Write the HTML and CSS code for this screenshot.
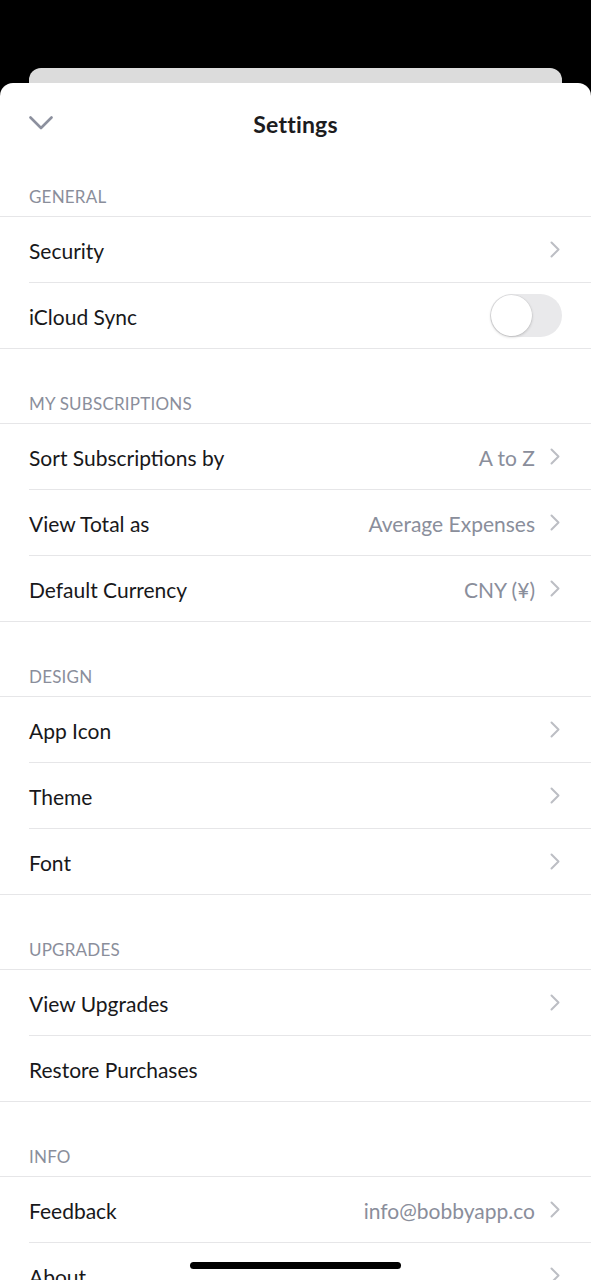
FILE: index.html
```html
<!DOCTYPE html>
<html>
<head>
<meta charset="utf-8">
<link rel="stylesheet" href="styles.css">
</head>
<body>
<div class="backcard"></div>
<div class="sheet">
  <div class="nav">
    <svg class="down" width="24" height="14" viewBox="0 0 24 14"><path d="M1.5 1.5 L12 12 L22.5 1.5" fill="none" stroke="#8c909e" stroke-width="2.6" stroke-linecap="round" stroke-linejoin="round"/></svg>
    <div class="title">Settings</div>
  </div>

  <div class="sechead">GENERAL</div>
  <div class="group">
    <div class="row"><span class="label">Security</span><span class="right"><svg class="chev" width="10" height="17" viewBox="0 0 10 17"><path d="M1.5 1.5 L8.5 8.5 L1.5 15.5" fill="none" stroke="#bcbec4" stroke-width="2" stroke-linecap="round" stroke-linejoin="round"/></svg></span></div>
    <div class="row"><span class="label">iCloud Sync</span><span class="toggle"><span class="knob"></span></span></div>
  </div>

  <div class="sechead">MY SUBSCRIPTIONS</div>
  <div class="group">
    <div class="row"><span class="label">Sort Subscriptions by</span><span class="right"><span class="value">A to Z</span><svg class="chev" width="10" height="17" viewBox="0 0 10 17"><path d="M1.5 1.5 L8.5 8.5 L1.5 15.5" fill="none" stroke="#bcbec4" stroke-width="2" stroke-linecap="round" stroke-linejoin="round"/></svg></span></div>
    <div class="row"><span class="label">View Total as</span><span class="right"><span class="value">Average Expenses</span><svg class="chev" width="10" height="17" viewBox="0 0 10 17"><path d="M1.5 1.5 L8.5 8.5 L1.5 15.5" fill="none" stroke="#bcbec4" stroke-width="2" stroke-linecap="round" stroke-linejoin="round"/></svg></span></div>
    <div class="row"><span class="label">Default Currency</span><span class="right"><span class="value">CNY (¥)</span><svg class="chev" width="10" height="17" viewBox="0 0 10 17"><path d="M1.5 1.5 L8.5 8.5 L1.5 15.5" fill="none" stroke="#bcbec4" stroke-width="2" stroke-linecap="round" stroke-linejoin="round"/></svg></span></div>
  </div>

  <div class="sechead">DESIGN</div>
  <div class="group">
    <div class="row"><span class="label">App Icon</span><span class="right"><svg class="chev" width="10" height="17" viewBox="0 0 10 17"><path d="M1.5 1.5 L8.5 8.5 L1.5 15.5" fill="none" stroke="#bcbec4" stroke-width="2" stroke-linecap="round" stroke-linejoin="round"/></svg></span></div>
    <div class="row"><span class="label">Theme</span><span class="right"><svg class="chev" width="10" height="17" viewBox="0 0 10 17"><path d="M1.5 1.5 L8.5 8.5 L1.5 15.5" fill="none" stroke="#bcbec4" stroke-width="2" stroke-linecap="round" stroke-linejoin="round"/></svg></span></div>
    <div class="row"><span class="label">Font</span><span class="right"><svg class="chev" width="10" height="17" viewBox="0 0 10 17"><path d="M1.5 1.5 L8.5 8.5 L1.5 15.5" fill="none" stroke="#bcbec4" stroke-width="2" stroke-linecap="round" stroke-linejoin="round"/></svg></span></div>
  </div>

  <div class="sechead">UPGRADES</div>
  <div class="group">
    <div class="row"><span class="label">View Upgrades</span><span class="right"><svg class="chev" width="10" height="17" viewBox="0 0 10 17"><path d="M1.5 1.5 L8.5 8.5 L1.5 15.5" fill="none" stroke="#bcbec4" stroke-width="2" stroke-linecap="round" stroke-linejoin="round"/></svg></span></div>
    <div class="row"><span class="label">Restore Purchases</span></div>
  </div>

  <div class="sechead">INFO</div>
  <div class="group">
    <div class="row"><span class="label">Feedback</span><span class="right"><span class="value">info@bobbyapp.co</span><svg class="chev" width="10" height="17" viewBox="0 0 10 17"><path d="M1.5 1.5 L8.5 8.5 L1.5 15.5" fill="none" stroke="#bcbec4" stroke-width="2" stroke-linecap="round" stroke-linejoin="round"/></svg></span></div>
    <div class="row"><span class="label">About</span><span class="right"><svg class="chev" width="10" height="17" viewBox="0 0 10 17"><path d="M1.5 1.5 L8.5 8.5 L1.5 15.5" fill="none" stroke="#bcbec4" stroke-width="2" stroke-linecap="round" stroke-linejoin="round"/></svg></span></div>
  </div>
</div>
<div class="home-indicator"></div>
</body>
</html>
```

FILE: styles.css
```css
html, body {
  margin: 0;
  padding: 0;
}
body {
  background: #000;
  width: 591px;
  height: 1280px;
  overflow: hidden;
  position: relative;
  font-family: "Lato", "Open Sans", sans-serif;
  -webkit-font-smoothing: antialiased;
}
.backcard {
  margin: 68px 29px 0;
  height: 15px;
  background: #dcdcdc;
  border-radius: 12px 12px 0 0;
}
.sheet {
  background: #fff;
  border-radius: 13px 13px 0 0;
  min-height: 1300px;
}
.nav {
  height: 59px;
  display: grid;
  grid-template-columns: 100px 1fr 100px;
  align-items: start;
}
.down {
  margin: 33px 0 0 29px;
}
.title {
  grid-column: 2;
  text-align: center;
  padding-top: 27px;
  line-height: 28px;
  font-size: 23px;
  font-weight: 700;
  letter-spacing: 0.2px;
  color: #1c1c1e;
}
.sechead {
  height: 75px;
  box-sizing: border-box;
  padding: 45px 29px 0;
  line-height: 20px;
  font-size: 17px;
  color: #8a8e9b;
  letter-spacing: 0.2px;
  border-bottom: 1px solid #e6e6e8;
}
.group {
  border-bottom: 1px solid #e6e6e8;
}
.row {
  height: 65px;
  padding: 0 31px 0 29px;
  display: flex;
  align-items: center;
  justify-content: space-between;
  position: relative;
}
.row + .row {
  border-top: 1px solid transparent;
}
.row + .row::before {
  content: "";
  position: absolute;
  left: 29px;
  right: 0;
  top: -1px;
  border-top: 1px solid #e6e6e8;
}
.label {
  font-size: 21px;
  color: #18181a;
  padding-top: 2px;
}
.right {
  display: flex;
  align-items: center;
  gap: 15px;
}
.value {
  font-size: 21px;
  color: #8a8e9b;
  padding-top: 2px;
}
.chev {
  display: block;
}
.toggle {
  width: 72px;
  height: 43px;
  border-radius: 22px;
  background: #e9e9eb;
  margin-right: -2px;
  position: relative;
  box-sizing: border-box;
}
.knob {
  position: absolute;
  left: 1px;
  top: 1px;
  width: 41px;
  height: 41px;
  border-radius: 50%;
  background: #fff;
  box-shadow: 0 1px 3px rgba(0,0,0,0.2), 0 0 0 0.5px rgba(0,0,0,0.06);
}
.home-indicator {
  position: absolute;
  left: 190px;
  top: 1262px;
  width: 211px;
  height: 7px;
  border-radius: 4px;
  background: #000;
}
```
